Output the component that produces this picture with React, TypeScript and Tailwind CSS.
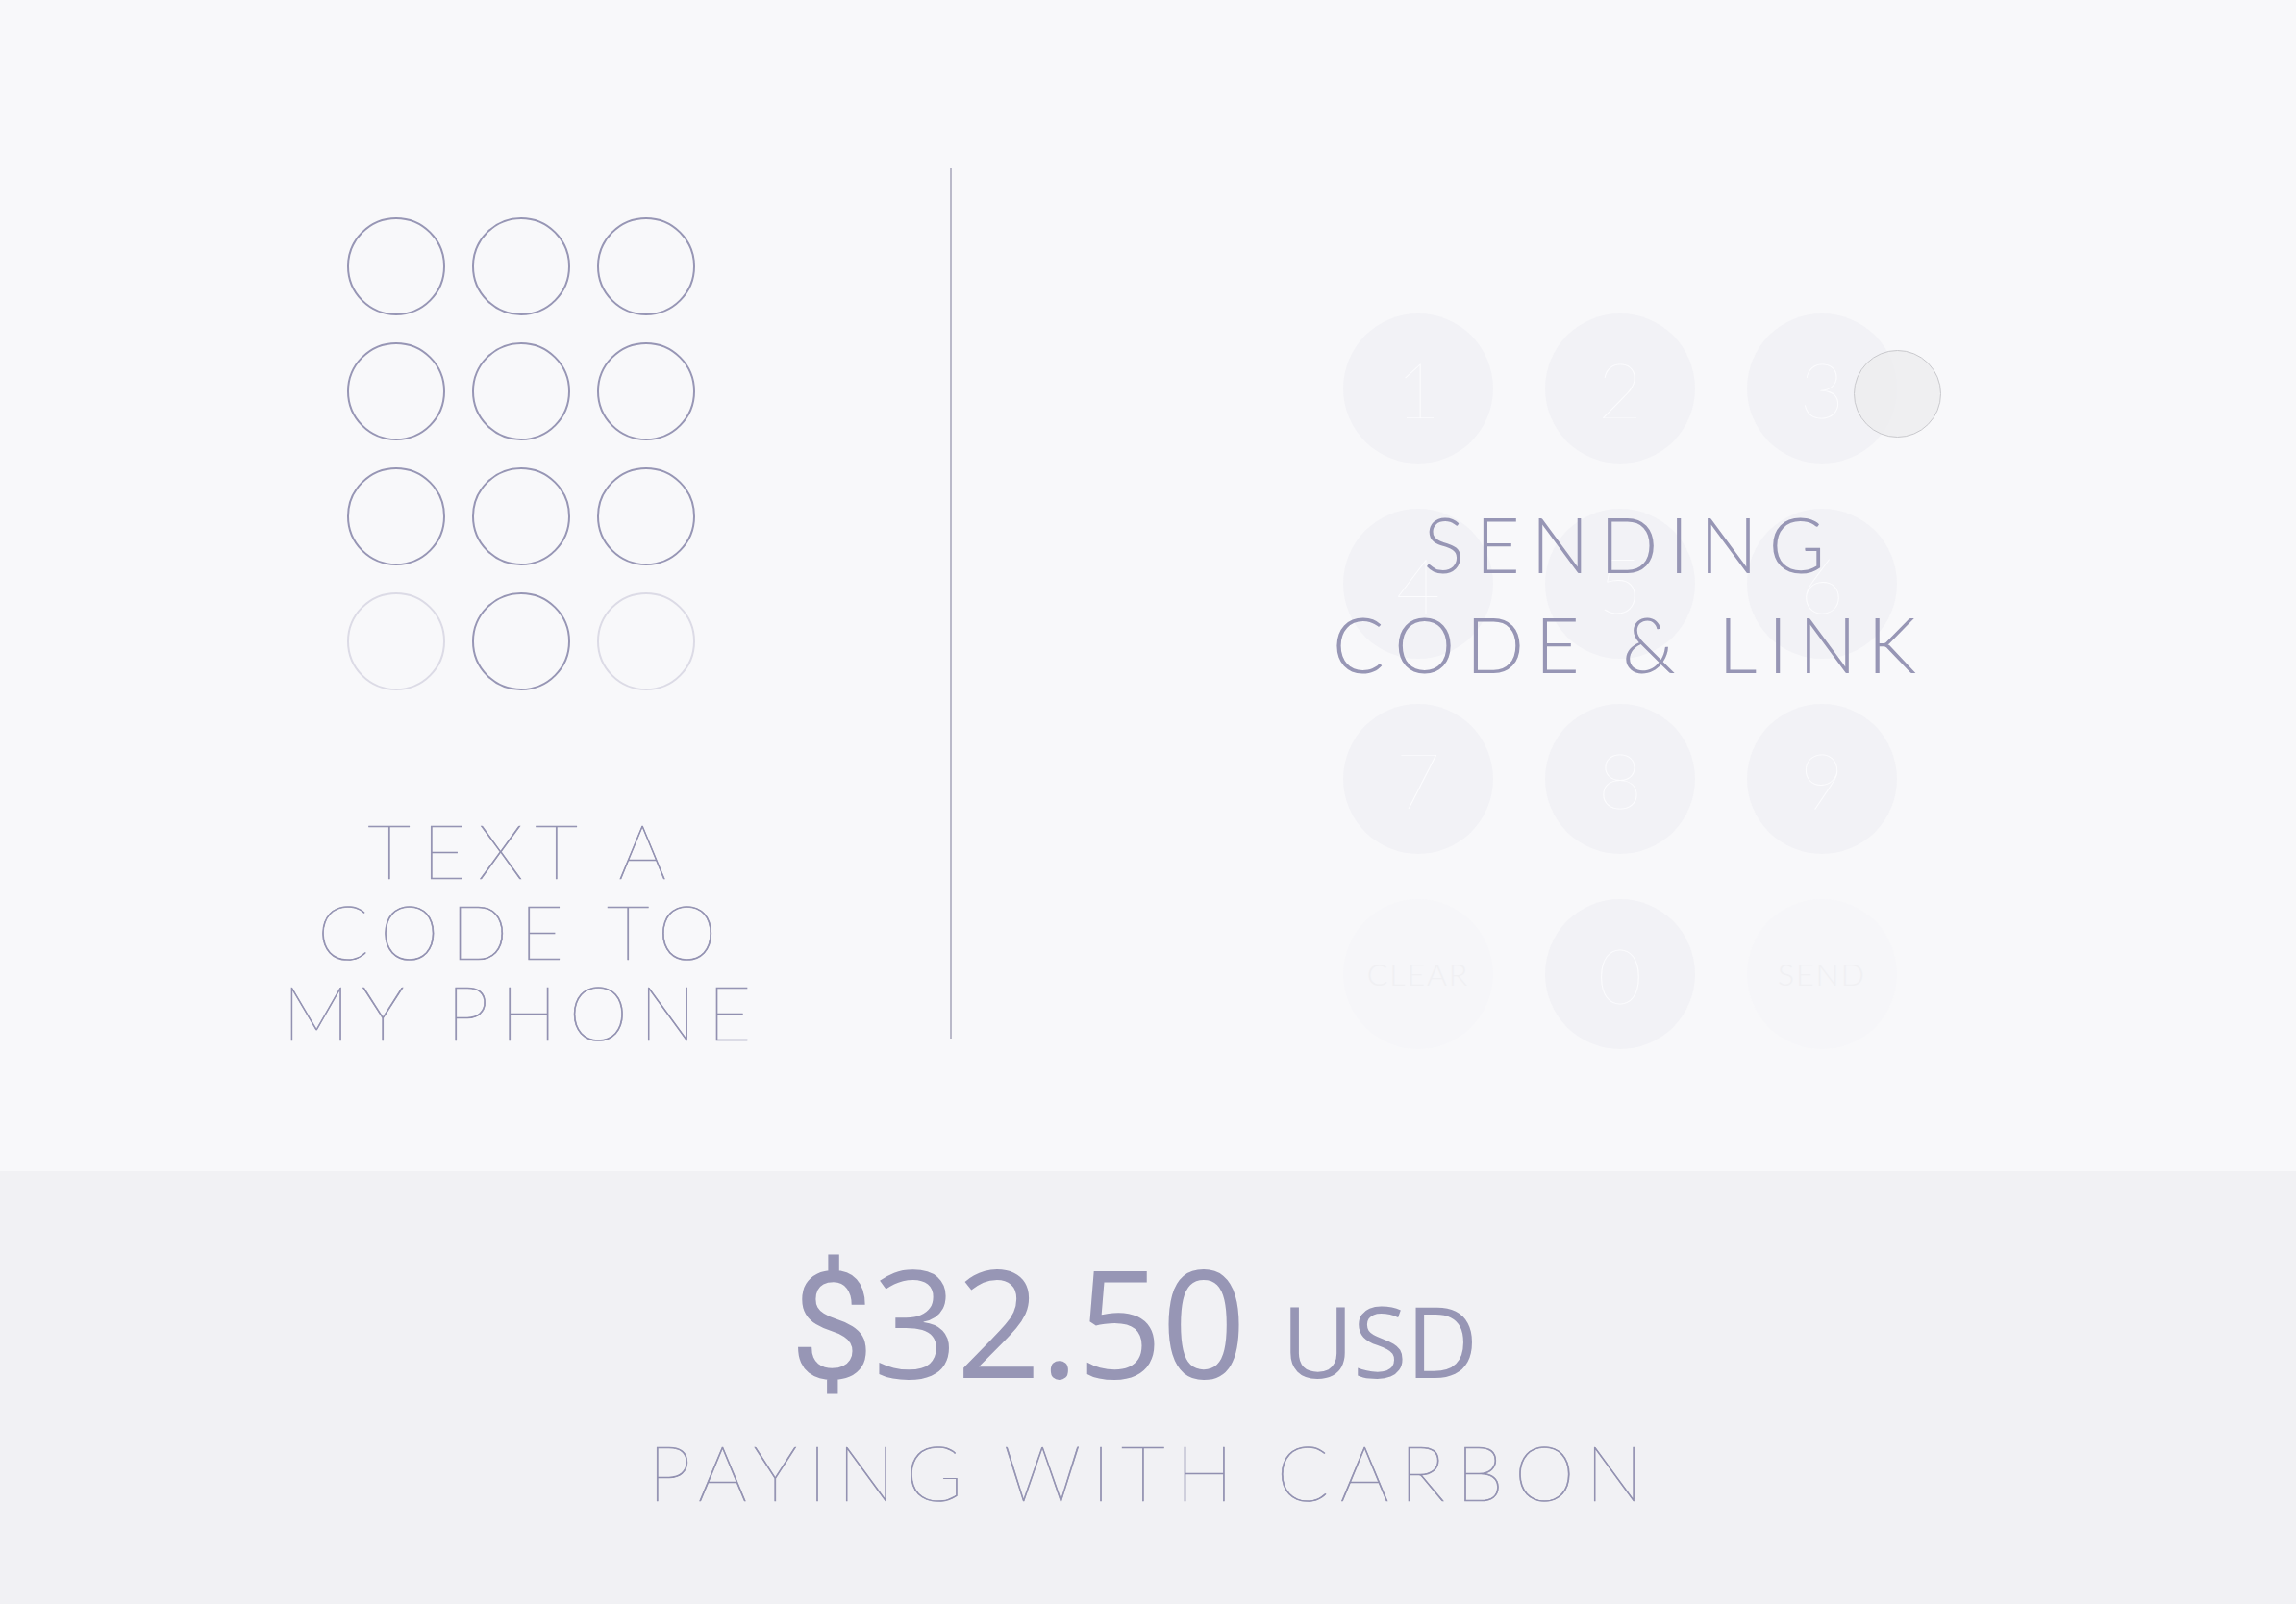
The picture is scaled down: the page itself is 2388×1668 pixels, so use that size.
const keys = ["1", "2", "3", "4", "5", "6", "7", "8", "9"];

const Dot = ({ faded }: { faded?: boolean }) => (
  <div
    className={
      faded
        ? "w-[102px] h-[102px] rounded-full border-2 border-[#dcdbe6]"
        : "w-[102px] h-[102px] rounded-full border-2 border-[#9796b5]"
    }
  />
);

const Key = ({ label }: { label: string }) => (
  <div className="w-[156px] h-[156px] rounded-full bg-[#f2f2f6] flex items-center justify-center text-[80px] leading-none font-thin text-[#fcfcfe]">
    {label}
  </div>
);

const SideKey = ({ label }: { label: string }) => (
  <div className="w-[156px] h-[156px] rounded-full bg-[#f6f6f9] flex items-center justify-center text-[32px] leading-none font-light tracking-[0.06em] text-[#f0f0f3]">
    {label}
  </div>
);

export default function App() {
  return (
    <div className="w-[2388px] h-[1668px] flex flex-col font-['Lato',sans-serif] bg-[#f8f8fa] overflow-hidden">
      <div className="h-[1218px] flex">
        <div className="w-[988px] pt-[226px] pl-[96px] flex flex-col items-center">
          <div className="grid grid-cols-3 gap-x-[28px] gap-y-[28px]">
            {Array.from({ length: 9 }).map((_, i) => (
              <Dot key={i} />
            ))}
            <Dot faded />
            <Dot />
            <Dot faded />
          </div>
          <div className="mt-[124px] ml-[4px] whitespace-nowrap text-center text-[78px] leading-[84px] font-thin tracking-[0.16em] text-[#9190b0] [-webkit-text-stroke:0.7px_#9190b0]">
            <div>TEXT A</div>
            <div>CODE TO</div>
            <div>MY PHONE</div>
          </div>
        </div>

        <div className="mt-[175px] h-[905px] w-[2px] bg-[#bab9c9]" />

        <div className="flex-1 flex justify-center pt-[326px] pr-[8px]">
          <div className="relative">
            <div className="grid grid-cols-3 gap-x-[54px] gap-y-[47px]">
              {keys.map((k) => (
                <Key key={k} label={k} />
              ))}
              <SideKey label="CLEAR" />
              <Key label="0" />
              <SideKey label="SEND" />
            </div>
            <div className="absolute left-[531px] top-[38px] w-[91px] h-[91px] rounded-full border-[1.5px] border-[#c9c9cd] bg-[#ececef]/80" />
            <div className="absolute top-[187px] left-[-200px] right-[-200px] pl-[20px] whitespace-nowrap text-center text-[80px] leading-[104px] font-light tracking-[0.14em] text-[#9796b5]">
              <div>SENDING</div>
              <div>CODE &amp; LINK</div>
            </div>
          </div>
        </div>
      </div>

      <div className="flex-1 bg-[#f1f1f4] flex flex-col items-center pt-[77px]">
        <div className="flex items-baseline mr-[30px] font-['Open_Sans',sans-serif] text-[#9796b5] leading-none">
          <span className="text-[155px] font-normal tracking-[-0.01em]">
            <span className="font-['Roboto',sans-serif]">$</span>32.50
          </span>
          <span className="ml-[38px] text-[103px] font-normal tracking-[-0.01em]">USD</span>
        </div>
        <div className="mt-[32px] pl-[6px] whitespace-nowrap text-[80px] leading-none font-thin tracking-[0.14em] text-[#9190b0] [-webkit-text-stroke:0.7px_#9190b0]">
          PAYING WITH CARBON
        </div>
      </div>
    </div>
  );
}
